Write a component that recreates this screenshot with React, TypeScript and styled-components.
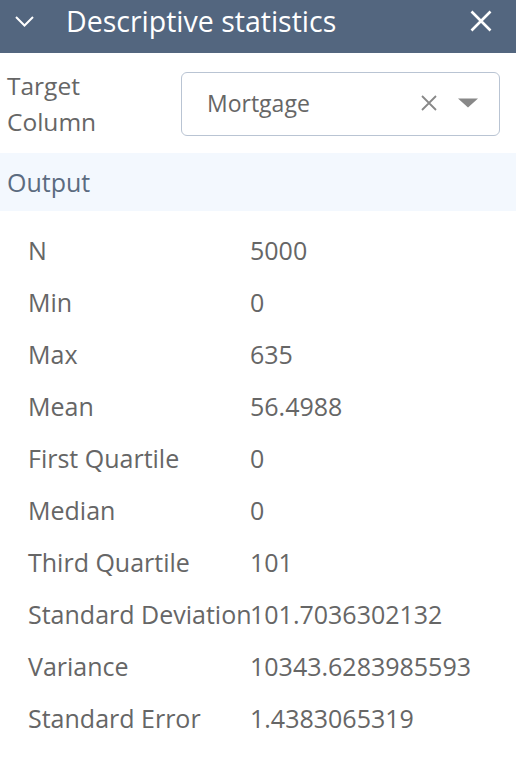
import React from "react";
import styled, { createGlobalStyle } from "styled-components";

const Global = createGlobalStyle`
    html, body {
        margin: 0;
        padding: 0;
        background: #fff;
        font-family: "Open Sans", "Noto Sans", sans-serif;
    }
`;

const Panel = styled.div`
    width: 516px;
    height: 762px;
    overflow: hidden;
`;

const Header = styled.header`
    height: 53px;
    background: #53667f;
    display: flex;
    align-items: center;
    padding: 0 24px 11px 15px;
    box-sizing: border-box;
    color: #fff;
`;

const Title = styled.h1`
    flex: 1;
    margin: 0 0 0 32px;
    font-size: 28.5px;
    font-weight: 400;
    line-height: 1;
`;

const IconButton = styled.span`
    display: flex;
    align-items: center;
    justify-content: center;
`;

const Field = styled.div`
    display: flex;
    align-items: center;
    padding: 18px 16px 16px 7px;
    height: 100px;
    box-sizing: border-box;
`;

const Label = styled.label`
    width: 174px;
    font-size: 24.5px;
    line-height: 36px;
    color: #666;
`;

const Select = styled.div`
    flex: 1;
    height: 64px;
    box-sizing: border-box;
    border: 1.5px solid #b9c4d3;
    border-radius: 6px;
    display: flex;
    align-items: center;
    padding: 0 21px 3px 25px;
    gap: 21px;
`;

const Value = styled.span`
    flex: 1;
    font-size: 23px;
    color: #666;
`;

const Section = styled.div`
    background: #f3f8fe;
    height: 58px;
    display: flex;
    align-items: center;
    padding: 0 0 0 7px;
    font-size: 25px;
    color: #5b6b80;
`;

const Stats = styled.div`
    padding: 13px 0 0 28px;
`;

const Row = styled.div`
    display: grid;
    grid-template-columns: 222px 1fr;
    height: 52px;
    align-items: center;
    font-size: 25px;
    color: #666;
    white-space: nowrap;
`;

const stats: [string, string][] = [
    ["N", "5000"],
    ["Min", "0"],
    ["Max", "635"],
    ["Mean", "56.4988"],
    ["First Quartile", "0"],
    ["Median", "0"],
    ["Third Quartile", "101"],
    ["Standard Deviation", "101.7036302132"],
    ["Variance", "10343.6283985593"],
    ["Standard Error", "1.4383065319"],
];

function App() {
    return (
        <Panel>
            <Global />
            <Header>
                <IconButton>
                    <svg width="19" height="11" viewBox="0 0 19 11">
                        <path d="M1 1 L9.5 9.5 L18 1" fill="none" stroke="#fff" strokeWidth="2" />
                    </svg>
                </IconButton>
                <Title>Descriptive statistics</Title>
                <IconButton>
                    <svg width="22" height="22" viewBox="0 0 22 22">
                        <path d="M1.5 1.5 L20.5 20.5 M20.5 1.5 L1.5 20.5" fill="none" stroke="#fff" strokeWidth="2.6" />
                    </svg>
                </IconButton>
            </Header>
            <Field>
                <Label>
                    Target
                    <br />
                    Column
                </Label>
                <Select>
                    <Value>Mortgage</Value>
                    <svg width="16" height="16" viewBox="0 0 16 16">
                        <path d="M1 1 L15 15 M15 1 L1 15" fill="none" stroke="#888" strokeWidth="1.8" />
                    </svg>
                    <svg width="20" height="10" viewBox="0 0 20 10">
                        <path d="M0 0.5 L20 0.5 L10 9.5 Z" fill="#888" />
                    </svg>
                </Select>
            </Field>
            <Section>Output</Section>
            <Stats>
                {stats.map(([k, v]) => (
                    <Row key={k}>
                        <span>{k}</span>
                        <span>{v}</span>
                    </Row>
                ))}
            </Stats>
        </Panel>
    );
}

export default App;
